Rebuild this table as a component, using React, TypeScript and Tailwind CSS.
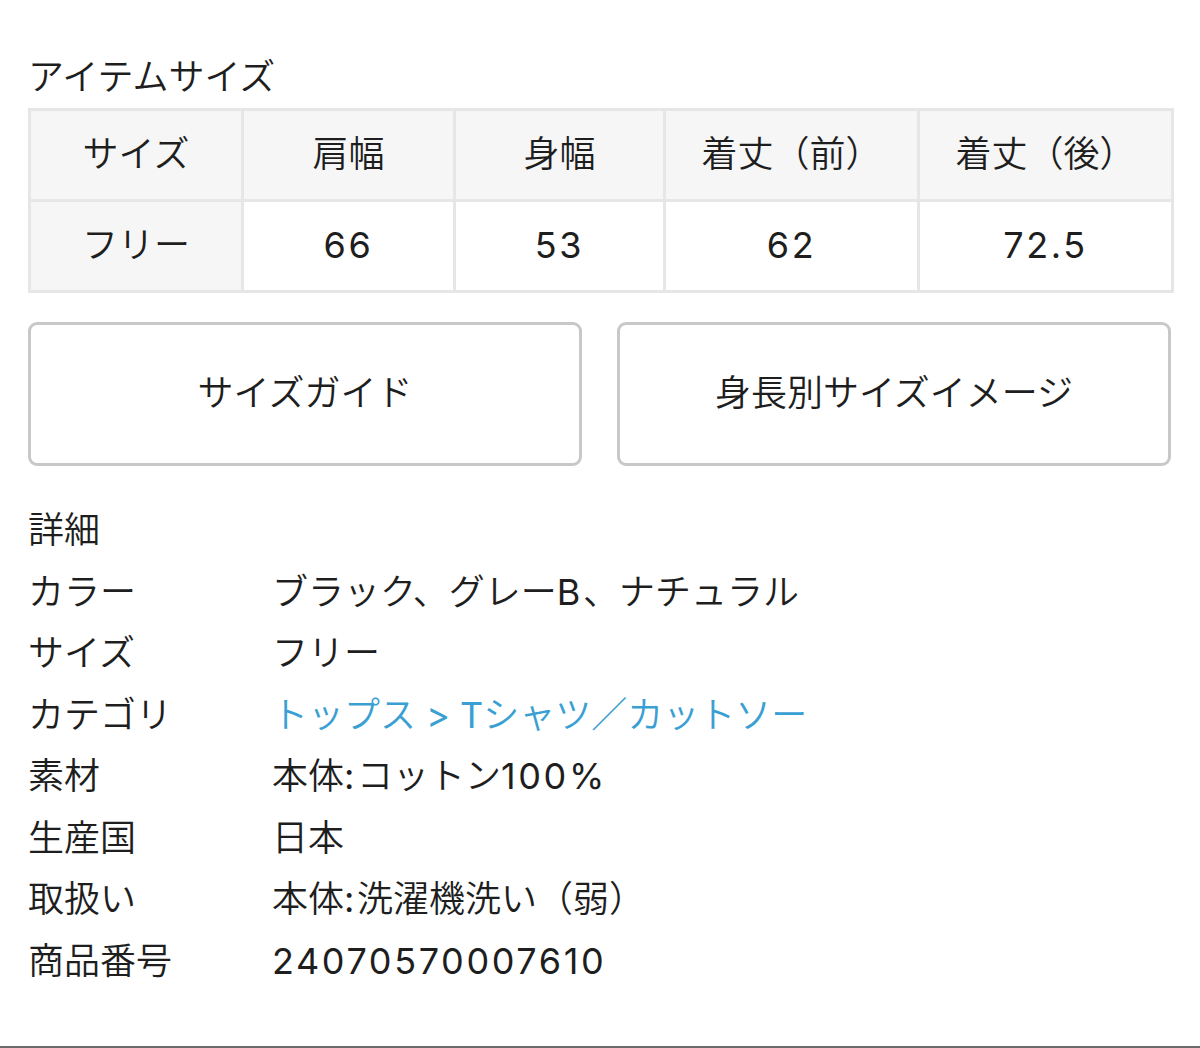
import React from "react";

const font = { fontFamily: '"DejaVu Sans", "Noto Sans CJK JP", sans-serif' };

function T({ s, tight }: { s: string; tight?: boolean }) {
  const parts = s.split(/([\x20-\x7E]+)/);
  return (
    <>
      {parts.map((p, i) =>
        p === "" ? null : /^[\x20-\x7E]+$/.test(p) ? (
          <span
            key={i}
            className={
              tight
                ? "font-['Inter',sans-serif] font-normal leading-none tracking-normal"
                : "font-['Inter',sans-serif] font-normal leading-none tracking-[2.6px]"
            }
          >
            {p}
          </span>
        ) : (
          <span key={i}>{p}</span>
        )
      )}
    </>
  );
}

export default function App() {
  const details: [string, string, boolean?][] = [
    ["カラー", "ブラック、グレーB、ナチュラル"],
    ["サイズ", "フリー"],
    ["カテゴリ", "トップス > Tシャツ／カットソー", true],
    ["素材", "本体:コットン100%"],
    ["生産国", "日本"],
    ["取扱い", "本体:洗濯機洗い（弱）"],
    ["商品番号", "24070570007610"],
  ];
  return (
    <div
      className="w-[1200px] h-[1048px] bg-white text-[#1e1e1e] flex flex-col font-[350]"
      style={font}
    >
      <div className="flex-1 px-[28px] pt-[56px]">
        <div className="text-[36px] leading-[44px]">アイテムサイズ</div>
        <table className="mt-[8px] w-[1143px] border-collapse text-[36px] table-fixed">
          <colgroup>
            <col className="w-[213px]" />
            <col className="w-[212px]" />
            <col className="w-[210px]" />
            <col className="w-[254px]" />
            <col className="w-[254px]" />
          </colgroup>
          <tbody>
            <tr className="h-[91px] bg-[#f6f6f6]">
              {["サイズ", "肩幅", "身幅", "着丈（前）", "着丈（後）"].map((t) => (
                <td key={t} className="border-[3px] border-[#e6e6e6] text-center align-middle">
                  <T s={t} />
                </td>
              ))}
            </tr>
            <tr className="h-[91px]">
              <td className="border-[3px] border-[#e6e6e6] text-center bg-[#f6f6f6]">フリー</td>
              {["66", "53", "62", "72.5"].map((t) => (
                <td key={t} className="border-[3px] border-[#e6e6e6] text-center">
                  <T s={t} />
                </td>
              ))}
            </tr>
          </tbody>
        </table>
        <div className="mt-[29px] flex gap-[35px]">
          <div className="w-[554px] h-[144px] border-[3px] border-[#c8c8c8] rounded-[9px] flex items-center justify-center text-[36px]">
            サイズガイド
          </div>
          <div className="w-[554px] h-[144px] border-[3px] border-[#c8c8c8] rounded-[9px] flex items-center justify-center text-[36px]">
            身長別サイズイメージ
          </div>
        </div>
        <div className="mt-[34px] text-[36px] leading-[61.5px]">
          <div>詳細</div>
          {details.map(([k, v, link]) => (
            <div key={k} className="flex">
              <div className="w-[244px] shrink-0">{k}</div>
              <div className={link ? "text-[#3a9fd2]" : ""}>
                <T s={v} tight={!!link} />
              </div>
            </div>
          ))}
        </div>
      </div>
      <div className="h-[2px] bg-[#6a6a6a]" />
    </div>
  );
}
